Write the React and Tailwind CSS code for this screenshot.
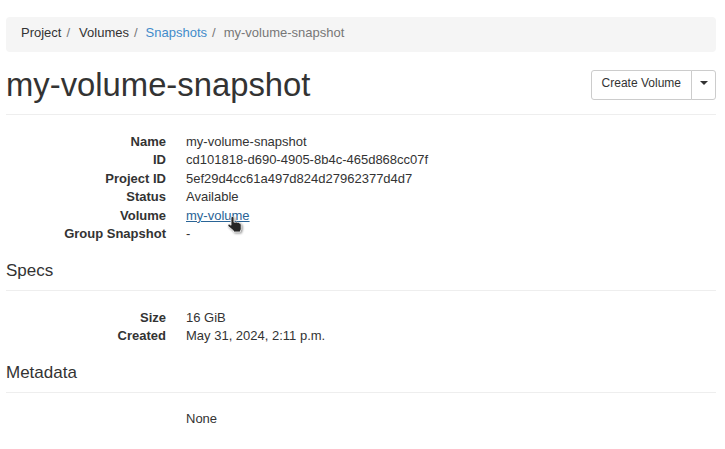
const F = "font-['Liberation_Sans',Arial,sans-serif]";
function Row({ k, children }) {
  return (
    <div className="flex h-[18.5px] leading-[18.5px]">
      <div className="w-[160px] text-right font-bold text-[#333] shrink-0">{k}</div>
      <div className="ml-5 text-[#333]">{children}</div>
    </div>
  );
}
function Hand() {
  return (
    <svg className="absolute left-[41px] top-[9px] drop-shadow-[1px_1px_1px_rgba(0,0,0,0.45)]" width="18" height="18" viewBox="0 0 18 18">
      <path d="M5.500 0.500c.9 0 1.500.6 1.500 1.500v4.300c.5-.3 1.100-.3 1.600 0 .6-.3 1.300-.3 1.800.1.600-.2 1.300-.1 1.700.3l1 .6c.8.500 1.100 1.100 1.100 2v3.400c0 .9-.3 1.500-.8 2.100v1.200H6.500v-1.200L1.500 10.500c-.6-.7-.7-1.400-.2-1.900.5-.5 1.300-.4 2 .1l.7.600V2c0-.9.600-1.500 1.500-1.500z" fill="#262626" stroke="#fff" strokeWidth="0.8"/>
    </svg>
  );
}
export default function App() {
  return (
    <div className={`${F} w-[725px] h-[449px] bg-white text-[13px] text-[#333] overflow-hidden pl-1.5 pr-[9px] pt-[17px]`}>
      <nav className="h-[35px] bg-[#f5f5f5] rounded flex items-center pl-[15px] pb-[4px] leading-5">
        <span>Project</span><span className="text-[#777] pl-[5px] pr-[9px]">/</span>
        <span>Volumes</span><span className="text-[#777] pl-[5px] pr-[8px]">/</span>
        <span className="text-[#428bca]">Snapshots</span><span className="text-[#777] pl-[5px] pr-[8px]">/</span>
        <span className="text-[#777]">my-volume-snapshot</span>
      </nav>
      <div className="flex justify-between items-start h-[63px] border-b border-[#eee]">
        <h1 className="text-[32.8px] leading-[36px] text-[#333] mt-[15px]">my-volume-snapshot</h1>
        <div className="flex mt-[18px] text-[12px]">
          <button className="h-[30px] px-2.5 pb-1 border border-[#ccc] rounded-l-[3px] text-[#333] bg-white">Create Volume</button>
          <button className="h-[30px] w-[25px] -ml-px pb-1 border border-[#ccc] rounded-r-[3px] bg-white flex items-center justify-center">
            <span className="w-0 h-0 border-x-4 border-x-transparent border-t-4 border-t-[#333]"></span>
          </button>
        </div>
      </div>
      <div className="mt-[17.8px]">
        <Row k="Name">my-volume-snapshot</Row>
        <Row k="ID">cd101818-d690-4905-8b4c-465d868cc07f</Row>
        <Row k="Project ID">5ef29d4cc61a497d824d27962377d4d7</Row>
        <Row k="Status">Available</Row>
        <Row k="Volume"><span className="relative inline-block"><span className="text-[#2a6496] underline">my-volume</span><Hand /></span></Row>
        <Row k="Group Snapshot">-</Row>
      </div>
      <h2 className="text-[17px] leading-5 text-[#333] mt-[17.2px] pb-[9px] border-b border-[#eee]">Specs</h2>
      <div className="mt-[17.8px]">
        <Row k="Size">16 GiB</Row>
        <Row k="Created">May 31, 2024, 2:11 p.m.</Row>
      </div>
      <h2 className="text-[17px] leading-5 text-[#333] mt-[17.2px] pb-[9px] border-b border-[#eee]">Metadata</h2>
      <div className="mt-[16px] ml-[180px]">None</div>
    </div>
  );
}
